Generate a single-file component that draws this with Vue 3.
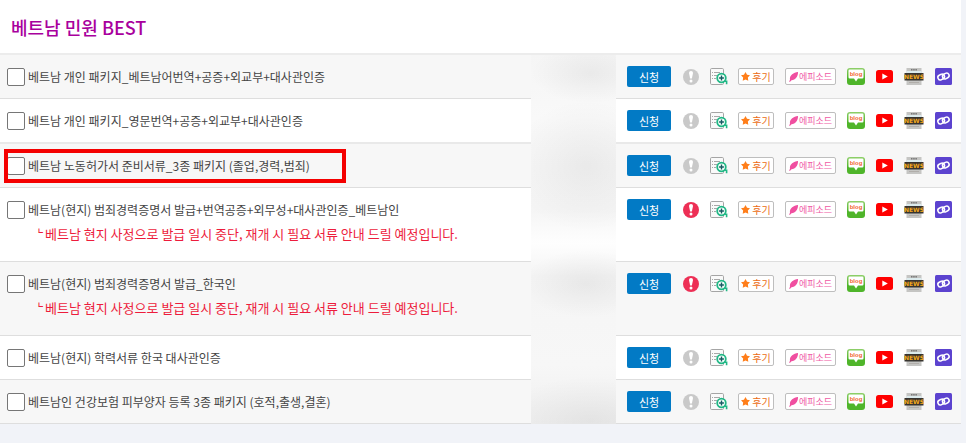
<script setup>
const notice = '베트남 현지 사정으로 발급 일시 중단, 재개 시 필요 서류 안내 드릴 예정입니다.'

const services = [
  { name: '베트남 개인 패키지_베트남어번역+공증+외교부+대사관인증' },
  { name: '베트남 개인 패키지_영문번역+공증+외교부+대사관인증' },
  { name: '베트남 노동허가서 준비서류_3종 패키지 (졸업,경력,범죄)', marked: true },
  { name: '베트남(현지) 범죄경력증명서 발급+번역공증+외무성+대사관인증_베트남인', notice },
  { name: '베트남(현지) 범죄경력증명서 발급_한국인', notice },
  { name: '베트남(현지) 학력서류 한국 대사관인증' },
  { name: '베트남인 건강보험 피부양자 등록 3종 패키지 (호적,출생,결혼)' },
]
</script>

<template>
  <main class="panel">
    <h2 class="title">베트남 민원 BEST</h2>
    <div class="list">
      <table class="services">
        <tbody>
          <tr v-for="(s, i) in services" :key="i" :class="{ tall: s.notice }">
            <td class="name">
              <label class="pick" :for="'service-' + i">
                <input type="checkbox" :id="'service-' + i" />
                <span>{{ s.name }}</span>
              </label>
              <p v-if="s.notice" class="notice"><span class="branch">┗</span>{{ s.notice }}</p>
              <span v-if="s.marked" class="marker"></span>
            </td>
            <td class="actions">
              <div class="tools">
                <button type="button" class="apply">신청</button>
                <a href="#" class="tool alert" :class="{ on: s.notice }">
                  <svg width="16" height="16" viewBox="0 0 16 16">
                    <circle cx="8" cy="8" r="8" fill="currentColor" />
                    <path d="M6 3.900a2 2 0 0 1 4 0L8.900 9.400H7.100z" fill="#fff" />
                    <circle cx="8" cy="12" r="1.500" fill="#fff" />
                  </svg>
                </a>
                <a href="#" class="tool detail">
                  <svg width="18" height="17" viewBox="0 0 18 17">
                    <rect x=".5" y=".5" width="13" height="16" rx="1.2" fill="#fafafa" stroke="#a5a5a5" />
                    <path d="M2 4.500h1m1 0h6M2 7.500h1m1 0h3M2 10.500h1m1 0h2" stroke="#a8a8a8" />
                    <circle cx="11.500" cy="10" r="4.300" fill="#f2fff9" stroke="#20b785" stroke-width="1.800" />
                    <path d="M14 13.200h2.600v3" fill="none" stroke="#20b785" stroke-width="1.600" />
                    <path d="M11.500 7.600v4.800M9.100 10h4.800" stroke="#175a62" stroke-width="1.400" />
                  </svg>
                </a>
                <a href="#" class="badge review">
                  <svg width="9" height="9" viewBox="0 0 10 10">
                    <path d="M5 0l1.700 3 3.300.600-2.400 2.500.500 3.700L5 8.300 1.900 9.800l.500-3.700L0 3.600 3.300 3z" fill="#ff7e1a" />
                  </svg>
                  <span>후기</span>
                </a>
                <a href="#" class="badge episode">
                  <svg width="9" height="10" viewBox="0 0 9 10">
                    <path d="M9 0C9.200 3.500 7 7.800 2.500 8.200L.8 10l-.6-.5.8-1.800C.2 4 4 .5 9 0z" fill="#f04fa0" />
                  </svg>
                  <span>에피소드</span>
                </a>
                <a href="#" class="tool blog">
                  <svg width="18" height="17" viewBox="0 0 18 17">
                    <defs>
                      <linearGradient :id="'leaf' + i" x2="0" y2="1">
                        <stop stop-color="#8fcf6a" />
                        <stop offset=".6" stop-color="#4fb52a" />
                      </linearGradient>
                    </defs>
                    <rect width="18" height="17" rx="3" :fill="'url(#leaf' + i + ')'" />
                    <path d="M2.700 1.500h12.600q1.200 0 1.200 1.200v6.600q0 1.200-1.200 1.200H11L9 13.500l-2-3H2.700q-1.200 0-1.200-1.200V2.700q0-1.200 1.200-1.200z" fill="#fff" />
                    <text x="9" y="8" text-anchor="middle" class="blog-word">blog</text>
                  </svg>
                </a>
                <a href="#" class="tool youtube">
                  <svg width="17" height="13" viewBox="0 0 17 13">
                    <rect width="17" height="13" rx="2.500" fill="#f00" />
                    <path d="M6.300 3.500l5.500 3-5.500 3z" fill="#fff" />
                  </svg>
                </a>
                <a href="#" class="tool news">
                  <svg width="20" height="17" viewBox="0 0 20 17">
                    <path d="M2.500 0h15v17h-15z" fill="#c5c5c3" />
                    <path d="M2.500 3h15v2h-15z" fill="#dcebed" />
                    <path d="M7 1h1.500v1.500H7zm2.200 0h1.500v1.500H9.200zm2.200 0h1.500v1.500h-1.500z" fill="#777" />
                    <path d="M5 14.500h10" stroke="#b1aeaa" />
                    <rect x=".5" y="5" width="19" height="7.500" fill="#373430" />
                    <text x="10" y="11" text-anchor="middle" class="news-word">NEWS</text>
                  </svg>
                </a>
                <a href="#" class="tool link">
                  <svg width="17" height="17" viewBox="0 0 17 17">
                    <rect width="17" height="17" rx="1.500" fill="#5c43cf" />
                    <g fill="none" stroke="#fff" stroke-width="1.500">
                      <rect x="2.800" y="6.500" width="6.800" height="5" rx="2.500" transform="rotate(-28 6.200 9)" />
                      <rect x="7.400" y="5.500" width="6.800" height="5" rx="2.500" transform="rotate(-28 10.800 8)" />
                    </g>
                  </svg>
                </a>
              </div>
            </td>
          </tr>
        </tbody>
      </table>
      <div class="mask"></div>
    </div>
  </main>
</template>

<style>
body {
  background: #f1f3f8;
}
</style>

<style scoped>
.panel {
  margin-right: 5px;
  background: #fff;
  font-family: "Noto Sans CJK KR", sans-serif;
  color: #444;
}
.title {
  margin: 0;
  padding: 15px 11px 14px;
  font-size: 18px;
  line-height: 24px;
  font-weight: 500;
  color: #a9009d;
}
.list {
  position: relative;
}
.services {
  width: 100%;
  border-collapse: separate;
  border-spacing: 0;
  border-top: 2px solid #ececec;
}
td {
  height: 43px;
  padding: 0;
  border-bottom: 1px solid #dedede;
  vertical-align: top;
}
.tall td {
  height: 73px;
}
tr:nth-child(odd) td {
  background: #f7f7f7;
}
tr:nth-child(2) td {
  border-bottom: 2px solid #e9e9e9;
}
.name {
  position: relative;
}
.pick {
  display: flex;
  align-items: center;
  gap: 3px;
  padding: 12px 0 0 7px;
  font-size: 12px;
  line-height: 20px;
}
.pick input {
  appearance: none;
  flex: none;
  width: 18px;
  height: 18px;
  margin: 0;
  border: 1px solid #767676;
  border-radius: 2px;
  background: #fff;
}
.pick input:checked {
  background: #027ac5;
}
.notice {
  margin: 4px 0 0;
  padding-left: 35px;
  font-size: 13px;
  line-height: 20px;
  color: #ed1c3c;
}
.branch {
  display: inline-block;
  width: 10px;
  font-size: 8px;
  vertical-align: 3px;
  line-height: 8px;
}
.marker {
  position: absolute;
  left: 4px;
  top: 5px;
  width: 334px;
  height: 26px;
  border: 4px solid #f40000;
  pointer-events: none;
}
.actions {
  width: 345px;
}
.tools {
  display: flex;
  align-items: center;
  height: 21px;
  padding: 11px 9px 0 11px;
}
.apply {
  width: 44px;
  height: 21px;
  margin-right: 12px;
  padding: 0;
  border: 0;
  border-radius: 2px;
  background: #027ac5;
  color: #fff;
  font-family: inherit;
  font-size: 11px;
  line-height: 20px;
}
.tool {
  display: flex;
  flex: none;
}
.alert {
  color: #c9c9c9;
  margin-right: 11px;
}
.alert.on {
  color: #ed2f55;
}
.detail {
  margin-right: 10px;
}
.badge {
  display: flex;
  align-items: center;
  justify-content: center;
  gap: 2px;
  box-sizing: border-box;
  height: 17px;
  border: 1px solid #bebebe;
  border-radius: 2px;
  background: #fff;
  font-size: 10px;
  line-height: 15px;
  text-decoration: none;
  white-space: nowrap;
}
.review {
  width: 36px;
  margin-right: 11px;
  color: #eb6c13;
}
.episode {
  width: 51px;
  gap: 1px;
  margin-right: 11px;
  color: #ef5aa5;
  font-size: 9px;
}
.blog,
.youtube,
.news {
  margin-right: 11px;
}
.blog-word {
  font: bold 6px "Liberation Sans", sans-serif;
  fill: #f2652f;
}
.news-word {
  font: bold 6px "DejaVu Sans", sans-serif;
  fill: #f3a91d;
}
.mask {
  position: absolute;
  top: 2px;
  bottom: 0;
  right: 345px;
  width: 85px;
  background:
    radial-gradient(ellipse 60px 30px at 70% 5%, rgba(0, 0, 0, 0.05), rgba(0, 0, 0, 0)),
    radial-gradient(ellipse 74px 66px at 65% 30%, rgba(0, 0, 0, 0.05), rgba(0, 0, 0, 0)),
    radial-gradient(ellipse 64px 34px at 65% 62%, rgba(0, 0, 0, 0.05), rgba(0, 0, 0, 0)),
    radial-gradient(ellipse 90px 44px at 70% 99%, rgba(0, 0, 0, 0.05), rgba(0, 0, 0, 0)),
    linear-gradient(#f5f5f5 0, #f9f9f9 17%, #f6f6f6 30%, #f5f5f5 42%, #fefefe 51%, #f4f4f4 60%, #f6f6f6 72%, #f7f7f7 84%, #efefef 100%);
}
</style>
